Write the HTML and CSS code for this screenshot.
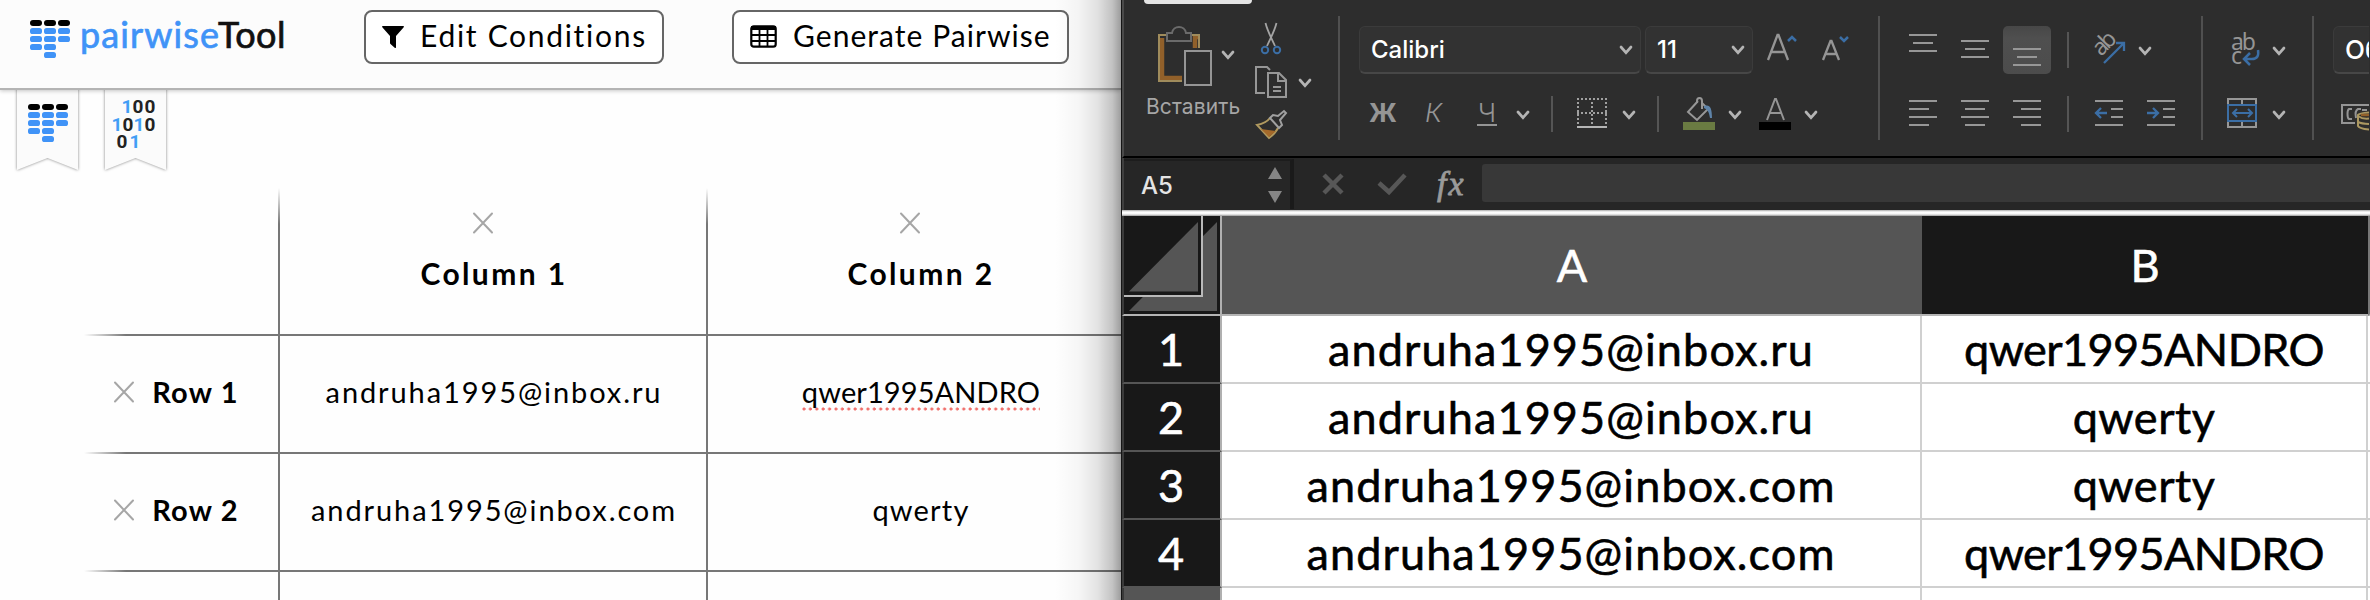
FILE: index.html
```html
<!DOCTYPE html>
<html lang="en">
<head>
<meta charset="utf-8">
<title>pairwiseTool</title>
<link rel="stylesheet" href="styles.css">
</head>
<body>
<svg width="0" height="0" class="defs">
  <defs>
    <symbol id="logo" viewBox="0 0 40 38">
      <g fill="#000"><rect width="12" height="6" rx="3"/><rect x="14" width="12" height="6" rx="3"/><rect x="28" width="12" height="6" rx="3"/></g>
      <g fill="#4093f7"><rect y="8" width="12" height="6" rx="2.6"/><rect x="14" y="8" width="12" height="6" rx="2.6"/><rect x="28" y="8" width="12" height="6" rx="2.6"/><rect y="16" width="12" height="6" rx="2.6"/><rect x="14" y="16" width="12" height="6" rx="2.6"/><rect x="28" y="16" width="12" height="6" rx="2.6"/><rect y="24" width="12" height="6" rx="2.6"/><rect x="14" y="24" width="12" height="6" rx="2.6"/><rect x="14" y="32" width="12" height="6" rx="2.6"/></g>
    </symbol>
    <symbol id="chev" viewBox="0 0 14 10"><path d="M2 2l5 5.6L12 2" fill="none" stroke="#b4b4b4" stroke-width="2.7" stroke-linecap="round"/></symbol>
    <symbol id="cross" viewBox="0 0 22 22"><path d="M2 1.500l18 19M20 1.500l-18 19" stroke="#a6a6a6" stroke-width="2" stroke-linecap="round"/></symbol>
  </defs>
</svg>
<div class="screen">
  <section class="tool">
    <header class="bar">
      <svg class="logo" width="40" height="38"><use href="#logo"/></svg>
      <div class="brand"><span class="brand-a">pairwise</span><span class="brand-b">Tool</span></div>
      <button class="btn btn-edit">
        <svg width="22" height="22" viewBox="0 0 22 22"><path d="M.5 0h21c.5 0 .5 1 0 1.500L14 10v11.500c0 .5-.8.7-1.300.3L8.500 18c-.4-.3-.5-.6-.5-1V10L.5 1.500C0 1 0 0 .5 0z"/></svg>
        <span class="edit-text">Edit Conditions</span>
      </button>
      <button class="btn btn-gen">
        <svg width="27" height="23" viewBox="0 0 27 23"><rect x="1.300" y="1.300" width="24.400" height="20.400" rx="2.500" fill="none" stroke="#000" stroke-width="2.200"/><path d="M1 1h25v4H1z"/><path d="M1 10h25M1 16h25M9.500 4v18M17.500 4v18" stroke="#000" stroke-width="1.800"/></svg>
        <span class="gen-text">Generate Pairwise</span>
      </button>
    </header>
    <div class="ribbons">
      <svg width="70" height="88" viewBox="0 0 70 88"><path class="flag" d="M4-8h61v90L34.500 70 4 82z"/><use href="#logo" x="15" y="16" width="40" height="38"/></svg>
      <svg width="70" height="88" viewBox="0 0 70 88" class="digits"><path class="flag" d="M4-8h61v90L34.500 70 4 82z"/>
        <g text-anchor="middle"><text class="one" x="26" y="25">1</text><text x="37" y="25">0</text><text x="49" y="25">0</text>
        <text class="one" x="16" y="43">1</text><text x="27" y="43">0</text><text class="one" x="38" y="43">1</text><text x="49" y="43">0</text>
        <text x="21" y="60">0</text><text class="one" x="34" y="60">1</text></g></svg>
    </div>
    <div class="table">
      <div class="row head">
        <div></div>
        <div class="col-head"><svg width="22" height="22"><use href="#cross"/></svg><b>Column 1</b></div>
        <div class="col-head"><svg width="22" height="22"><use href="#cross"/></svg><b>Column 2</b></div>
      </div>
      <div class="row">
        <div class="row-head"><svg width="22" height="22"><use href="#cross"/></svg><b>Row 1</b></div>
        <div class="cell email">andruha1995@inbox.ru</div>
        <div class="cell"><span class="spell">qwer1995ANDRO</span></div>
      </div>
      <div class="row">
        <div class="row-head"><svg width="22" height="22"><use href="#cross"/></svg><b>Row 2</b></div>
        <div class="cell email">andruha1995@inbox.com</div>
        <div class="cell">qwerty</div>
      </div>
    </div>
    <div class="shade"></div>
  </section>

  <section class="excel">
    <div class="ribbon">
      <div class="tab"></div>
      <div class="group clip">
        <div class="paste">
          <svg width="84" height="64" viewBox="1156 24 84 64" fill="none">
            <path d="M1162 38v40h20M1195 48V37h3" stroke="#91602a" stroke-width="4.500"/>
            <path d="M1166 35h-7v46h23M1191 35h8v13" stroke="#a08c5c" stroke-width="2"/>
            <path d="M1167 41V33h5c1-8 13-8 14 0h5v8z" fill="#2d2d2d" stroke="#6b6b6b" stroke-width="2"/>
            <path d="M1185 51h26v34h-26z" fill="#2d2d2d" stroke="#959595" stroke-width="2"/>
            <use href="#chev" x="1221" y="50" width="14" height="10"/>
          </svg>
          <span>Вставить</span>
        </div>
        <svg width="64" height="124" viewBox="1252 20 64 124" fill="none">
          <path d="M1265.500 23c2 8 4 11 9.500 23M1276.500 23c-2 8-4 11-9.500 23" stroke="#a3a3a3" stroke-width="1.800"/>
          <circle cx="1265" cy="50" r="3.200" stroke="#3b6ea5" stroke-width="2"/><circle cx="1277" cy="50" r="3.200" stroke="#3b6ea5" stroke-width="2"/>
          <path d="M1265 93h-9V67h11l3 3M1268 73h11l7 7v17h-18zM1278 73v8h8M1273 87h8M1273 91h8" stroke="#979797" stroke-width="2"/>
          <use href="#chev" x="1298" y="78" width="14" height="10"/>
          <path d="M1270 118c-3 4-8 6-13 7l12 13c4-3 7-6 9-10" stroke="#b0995f" stroke-width="2"/>
          <path d="M1261 129l8 8 7-6z" fill="#a4692a"/>
          <path d="M1270 118l3-3 5 1 6-5 2 2-6 7 2 5-3 3z" stroke="#a0a0a0" stroke-width="2"/>
        </svg>
      </div>
      <div class="group font">
        <div class="line">
          <div class="select name"><span>Calibri</span><svg width="14" height="10"><use href="#chev"/></svg></div>
          <div class="select size"><span>11</span><svg width="14" height="10"><use href="#chev"/></svg></div>
          <svg width="100" height="48" viewBox="1757 26 100 48" fill="none" stroke="#959595" stroke-width="2.300">
            <path d="M1768 60l9.500-25h1l9.500 25M1771 52h14M1823 60l7.500-19h1l7.500 19M1826 54h10"/><path d="M1788 41l4-4 4 4M1840 37l4 4 4-4" stroke="#3b6ea5" stroke-width="2.500"/></svg>
        </div>
        <div class="line lower">
          <b class="bold">Ж</b><i class="ital">К</i><span class="under">Ч</span>
          <svg width="310" height="48" viewBox="1510 90 310 48" fill="none">
            <use href="#chev" x="1516" y="110" width="14" height="10"/><path d="M1552 96v36M1658 96v36" stroke="#555" stroke-width="2"/>
            <path d="M1577 99h30M1577 113h30" stroke="#a0a0a0" stroke-width="2" stroke-dasharray="2 2"/><path d="M1578 102v22M1592 102v22M1606 102v22" stroke="#a0a0a0" stroke-width="2" stroke-dasharray="2 2"/><path d="M1577 127h30" stroke="#b5b5b5" stroke-width="2"/>
            <use href="#chev" x="1622" y="110" width="14" height="10"/>
            <path d="M1698 101l-10 11 9 8 11-11-6-6M1697 103v-2c0-4 5-4 5 0v8" stroke="#979797" stroke-width="2"/><path d="M1704 106c6-2 8 2 8 12h-2c-1-6-2-8-6-10z" fill="#5e83a8"/>
            <path d="M1683 122h32v8h-32z" fill="#6a7b42"/><use href="#chev" x="1728" y="110" width="14" height="10"/>
            <path d="M1767 120l8-21h1l8 21M1770 113h11" stroke="#959595" stroke-width="2"/><path d="M1759 122h32v8h-32z" fill="#000"/><use href="#chev" x="1804" y="110" width="14" height="10"/>
          </svg>
        </div>
      </div>
      <div class="group align">
        <svg width="320" height="128" viewBox="1881 20 320 128" fill="none" stroke="#979797" stroke-width="2">
          <defs><linearGradient id="on" x2="0" y2="1"><stop stop-color="#474747"/><stop offset=".25" stop-color="#4f4f4f"/><stop offset="1" stop-color="#4c4c4c"/></linearGradient></defs>
          <rect x="2003" y="26" width="48" height="48" rx="5" fill="url(#on)" stroke="none"/>
          <path d="M1909 35h28M1913 43h20M1909 51h28M1961 41h28M1965 49h20M1961 57h28M2013 49h28M2017 57h20M2013 65h28"/>
          <path d="M1909 101h28M1909 109h20M1909 117h28M1909 125h20M1961 101h28M1965 109h20M1961 117h28M1965 125h20M2013 101h28M2021 109h20M2013 117h28M2021 125h20"/>
          <path d="M2095 101h28M2111 109h12M2111 117h12M2095 125h28M2147 101h28M2163 109h12M2163 117h12M2147 125h28"/>
          <path d="M2068 32v36M2068 96v36" stroke="#555"/>
          <path d="M2104 63l20-20M2116 43h8v8M2107 113h-10M2101 108l-5 5 5 5M2147 113h10M2153 108l5 5-5 5" stroke="#3b6ea5" stroke-width="2.300"/>
          <text class="glyph" x="2101" y="57" transform="rotate(-45 2101 57)" textLength="24">ab</text>
          <use href="#chev" x="2138" y="46" width="14" height="10"/>
        </svg>
      </div>
      <div class="group wrap">
        <svg width="109" height="128" viewBox="2204 20 109 128" fill="none" stroke="#979797" stroke-width="2">
          <text class="glyph" x="2231" y="50" textLength="25">ab</text><text class="glyph" x="2231" y="64">c</text>
          <path d="M2258 50c1 6-1 9-6 9h-8M2250 53l-6 6 6 6" stroke="#3b6ea5" stroke-width="2.500"/>
          <path d="M2228 104v-5h28v5M2228 122v5h28v-5M2242 99v5M2242 122v5"/><path d="M2228 105h28v16h-28zM2233 113h18M2237 109l-4 4 4 4M2248 109l4 4-4 4" stroke="#3b6ea5"/>
          <use href="#chev" x="2272" y="46" width="14" height="10"/><use href="#chev" x="2272" y="110" width="14" height="10"/>
        </svg>
      </div>
      <div class="group number">
        <div class="select fmt"><span>Об</span></div>
        <svg width="37" height="40" viewBox="2333 94 37 40" fill="none" stroke="#959595" stroke-width="2">
          <path d="M2355 123h-13v-18h32"/><path d="M2352 109h-3c-2 1-2 9 0 10h3M2361 109h-3c-2 1-3 4-2 9M2362 110h5"/>
          <path d="M2358 115v11c2 3 10 4 16 3v-16c-6-1-14 0-16 2z" fill="#2d2d2d" stroke="#ab9861"/><path d="M2358 116c4 3 10 3 14 2M2358 122c4 2 10 2 14 2" stroke="#ab9861"/><path d="M2361 115h12" stroke="#91602a" stroke-width="2.500"/>
        </svg>
      </div>
    </div>
    <div class="formula">
      <div class="namebox"><span>A5</span><svg width="14" height="36" viewBox="0 0 14 36" fill="#858585"><path d="M7 0l7 12H0zM7 36l7-12H0z"/></svg></div>
      <svg width="140" height="40" viewBox="1294 165 140 40" fill="none" stroke="#575757" stroke-width="4.500"><path d="M1324 176l18 18M1342 176l-18 18M1379 184l10 9 16-17"/></svg>
      <span class="fx">fx</span>
      <div class="input"></div>
    </div>
    <div class="grid">
      <div class="corner"><svg width="96" height="98" viewBox="0 0 96 98"><path d="M5 95L93 6v89z" fill="#555"/><path d="M0 0h78v80H0z" fill="#181818"/><path d="M5 75.500L74 6v69.500z" fill="#555"/><path d="M78 0v80H0" fill="none" stroke="#b9b9b9" stroke-width="2"/></svg></div>
      <div class="th sel">A</div><div class="th">B</div><div class="th edge"></div>
      <div class="rn">1</div><div class="td a">andruha1995@inbox.ru</div><div class="td b">qwer1995ANDRO</div><div class="td"></div>
      <div class="rn">2</div><div class="td a">andruha1995@inbox.ru</div><div class="td">qwerty</div><div class="td"></div>
      <div class="rn">3</div><div class="td a">andruha1995@inbox.com</div><div class="td">qwerty</div><div class="td"></div>
      <div class="rn">4</div><div class="td a">andruha1995@inbox.com</div><div class="td b">qwer1995ANDRO</div><div class="td"></div>
      <div class="rn cur"></div><div class="td"></div><div class="td"></div><div class="td"></div>
    </div>
  </section>
</div>
</body>
</html>
```
FILE: styles.css
```css
* { box-sizing: border-box; }
body { margin: 0; width: 2370px; height: 600px; overflow: hidden; }
svg { display: block; flex: none; }
.defs { position: absolute; }
.screen { display: flex; width: 2370px; height: 600px; }

/* Pairwise tool */
.tool { position: relative; width: 1121px; height: 600px; overflow: hidden; background: #fefefe; font-family: Lato, "Noto Sans", sans-serif; color: #000; }
.bar { position: relative; z-index: 1; display: flex; align-items: flex-start; height: 90px; padding: 10px 0 0 30px; background: #fcfcfc; border-bottom: 2px solid #b4b4b4; box-shadow: 0 1px 4px rgba(0,0,0,.22); }
.logo { margin-top: 10px; }
.brand { display: flex; width: 204px; margin: 2px 0 0 10px; font-size: 36px; line-height: 44px; white-space: nowrap; -webkit-text-stroke: .7px; }
.brand-a { width: 138px; color: #4093f7; letter-spacing: 1.1px; }
.brand-b { color: #111; letter-spacing: .4px; }
.btn { display: flex; align-items: center; height: 54px; padding: 0 0 0 16px; border: 2px solid #666; border-radius: 8px; background: #fff; font: 30px Lato, "Noto Sans", sans-serif; color: #000; white-space: nowrap; }
.btn span { margin-left: 16px; margin-top: -5px; }
.btn svg { margin-top: -1px; }
.btn-edit { width: 300px; margin-left: 80px; }
.btn-gen { width: 337px; margin-left: 68px; }
.edit-text { letter-spacing: 1.7px; }
.gen-text { letter-spacing: 1.05px; }
.ribbons { display: flex; gap: 18px; height: 98px; padding-left: 13px; margin-top: -2px; }
.flag { fill: #fbfbfb; filter: drop-shadow(0 0 1.5px rgba(0,0,0,.5)); }
.digits { font: 700 19px Roboto, sans-serif; fill: #222; }
.digits .one { fill: #419df5; }
.table { width: 1050px; height: 414px; margin-left: 84px; background: linear-gradient(transparent, #777 36px) 194px 2px / 2px 412px no-repeat, linear-gradient(transparent, #777 36px) 622px 2px / 2px 412px no-repeat; }
.row { display: grid; grid-template-columns: 196px 428px 426px; height: 118px; background: linear-gradient(90deg, transparent, #777 42px) 0 100% / 100% 2px no-repeat; }
.head { height: 150px; }
.col-head { display: flex; flex-direction: column; align-items: center; padding-top: 26px; font-size: 30px; line-height: 36px; letter-spacing: 2.4px; }
.col-head svg { margin-left: -23px; margin-bottom: 21px; }
.row-head { display: flex; align-items: center; padding: 0 0 7px 29px; font-size: 29px; letter-spacing: 1.2px; }
.row-head b { width: 91px; margin-left: 15px; text-align: center; }
.cell { display: flex; align-items: center; justify-content: center; padding-bottom: 7px; font-size: 29px; letter-spacing: 1.2px; }
.email { letter-spacing: 1.9px; }
.spell { height: 38px; line-height: 38px; letter-spacing: .1px; background: radial-gradient(circle at 2px 2px, #f0706c 1.2px, transparent 1.9px) 0 100% / 6.4px 4px repeat-x; }
.shade { position: absolute; z-index: 2; right: 0; top: 0; width: 66px; height: 600px; background: linear-gradient(90deg, transparent, rgba(0,0,0,.03) 35%, rgba(0,0,0,.11) 65%, rgba(0,0,0,.23) 87%, rgba(0,0,0,.38)); }

/* Spreadsheet */
.excel { width: 1249px; height: 600px; border-left: 1px solid #161616; background: #2d2d2d; font-family: Inter, "Noto Sans", sans-serif; color: #fff; }
.ribbon { position: relative; display: flex; height: 158px; border-left: 2px solid #4a4a4a; border-bottom: 2px solid #000; }
.tab { position: absolute; left: 20px; top: 0; width: 108px; height: 4px; border-radius: 0 0 4px 4px; background: #e4e4e4; }
.group { position: relative; flex: none; height: 156px; }
.group + .group::before { content: ""; position: absolute; left: 0; top: 16px; width: 2px; height: 124px; background: #505050; }
.clip { display: flex; width: 214px; padding: 20px 0 0 20px; }
.paste { width: 108px; padding: 4px 0 0 12px; }
.paste span { display: block; margin: 6px 0 0 -12px; padding-left: 2px; color: #a6a6a6; font-size: 21px; line-height: 26px; letter-spacing: .1px; }
.font { width: 540px; padding: 26px 0 0 21px; }
.line { display: flex; height: 48px; }
.lower { margin-top: 16px; }
.select { display: flex; align-items: center; justify-content: space-between; height: 48px; padding: 0 7px 0 11px; border: 1px solid #3b3b3b; border-bottom: 2px solid #474747; border-radius: 6px; background: #323232; font-size: 24px; font-weight: 500; white-space: nowrap; }
.name { width: 282px; margin-right: 4px; }
.size { width: 108px; margin-right: 4px; }
.lower b, .lower i, .lower span { height: 48px; line-height: 46px; color: #959595; font-size: 26px; }
.bold { width: 56px; margin-left: 10px; }
.ital { width: 52px; font-weight: 300; }
.lower .under { width: 20px; height: 36px; margin-right: 13px; border-bottom: 2px solid #959595; font-weight: 300; text-align: center; }
.align { width: 323px; padding: 20px 0 0 3px; }
.wrap { width: 111px; padding: 20px 0 0 3px; }
.glyph { font: 23px "Noto Sans", sans-serif; fill: #959595; stroke: none; }
.number { width: 57px; padding: 26px 0 0 21px; overflow: hidden; }
.fmt { width: 80px; margin-bottom: 20px; font-size: 26px; }
.formula { display: flex; align-items: center; height: 52px; border-left: 2px solid #3f3f3f; background: #262626; }
.namebox { display: flex; align-items: center; justify-content: space-between; width: 170px; height: 50px; padding: 0 8px 0 17px; border-top: 2px solid #1d1d1d; border-right: 4px solid #1a1a1a; font-size: 24px; font-weight: 500; color: #e4e4e4; }
.fx { width: 48px; padding-left: 3px; font: italic 34px/40px "Liberation Serif", serif; letter-spacing: 2px; color: #9a9a9a; -webkit-text-stroke: .8px; }
.input { flex: 1; height: 38px; margin-bottom: 2px; border-radius: 3px 0 0 3px; background: #383838; }
.grid { display: grid; grid-template-columns: 100px 700px 446px 4px; grid-template-rows: 106px 68px 68px 68px 68px 14px; height: 390px; background: linear-gradient(#a8a8a8, #fff 2px, #f4f4f4 4px, #999 6px) 0 0 / 100% 6px no-repeat #fff; font: 45px Lato, "Noto Sans", sans-serif; -webkit-text-stroke: .6px; }
.grid > div { display: flex; align-items: center; justify-content: center; }
.corner, .rn { border-left: 2px solid #3a3a3a; border-right: 2px solid #b0b0b0; background: #181818; }
.corner, .th { margin-top: 6px; border-bottom: 2px solid #b5b5b5; }
.corner { overflow: hidden; }
.grid > .corner { justify-content: flex-start; }
.th { background: #181818; }
.sel { background: #555; }
.edge { border-left: 2px solid #777; }
.rn { border-bottom: 2px solid #555; padding-right: 2px; }
.grid > .cur { background: #555; }
.td { border-right: 2px solid #d0d0d0; border-bottom: 2px solid #d0d0d0; color: #000; letter-spacing: .5px; }
.td.a { letter-spacing: 1.1px; }
.td.b { letter-spacing: -.6px; }
```
